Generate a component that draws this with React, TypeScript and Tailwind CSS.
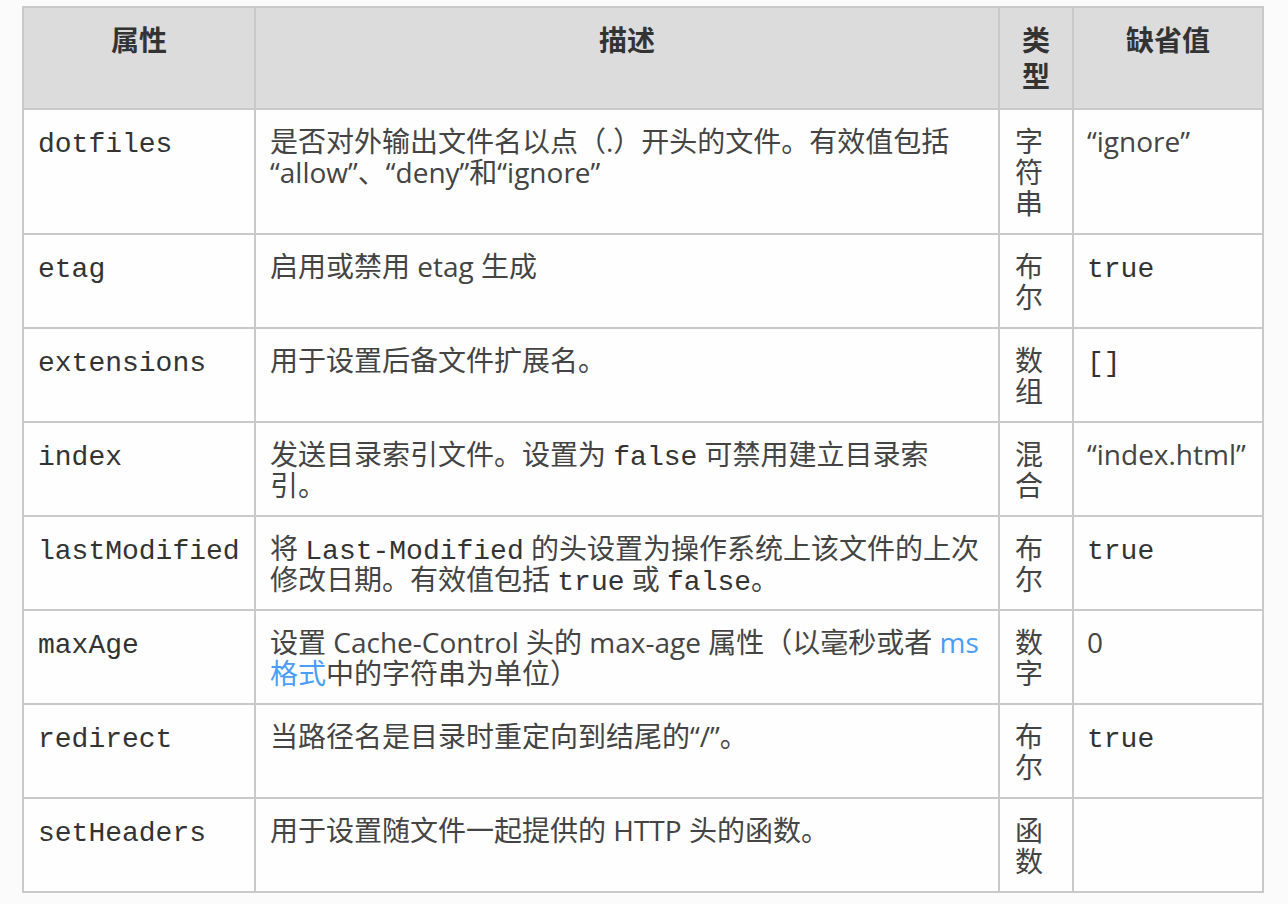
import type {ReactNode} from "react";

const sans = "font-['Open_Sans','Noto_Sans_CJK_SC',sans-serif]";

function Code({children}: {children: ReactNode}) {
  return (
    <span className="font-['Liberation_Mono','Noto_Sans_CJK_SC',monospace] leading-[20px] text-[#333]">
      {children}
    </span>
  );
}

function Link({children}: {children: ReactNode}) {
  return <span className="text-[#4a9df8]">{children}</span>;
}

type Row = {
  name: string;
  desc: ReactNode;
  type: string;
  def: ReactNode;
};

const rows: Row[] = [
  {
    name: "dotfiles",
    desc: (
      <>
        是否对外输出文件名以点（.）开头的文件。有效值包括
        <br />
        “allow”、“deny”和“ignore”
      </>
    ),
    type: "字符串",
    def: "“ignore”",
  },
  {name: "etag", desc: "启用或禁用 etag 生成", type: "布尔", def: <Code>true</Code>},
  {name: "extensions", desc: "用于设置后备文件扩展名。", type: "数组", def: <Code>[]</Code>},
  {
    name: "index",
    desc: (
      <>
        发送目录索引文件。设置为 <Code>false</Code> 可禁用建立目录索
        <br />
        引。
      </>
    ),
    type: "混合",
    def: "“index.html”",
  },
  {
    name: "lastModified",
    desc: (
      <>
        将 <Code>Last-Modified</Code> 的头设置为操作系统上该文件的上次
        <br />
        修改日期。有效值包括 <Code>true</Code> 或 <Code>false</Code>。
      </>
    ),
    type: "布尔",
    def: <Code>true</Code>,
  },
  {
    name: "maxAge",
    desc: (
      <>
        设置 Cache-Control 头的 max-age 属性（以毫秒或者 <Link>ms</Link>
        <br />
        <Link>格式</Link>中的字符串为单位）
      </>
    ),
    type: "数字",
    def: "0",
  },
  {name: "redirect", desc: "当路径名是目录时重定向到结尾的“/”。", type: "布尔", def: <Code>true</Code>},
  {name: "setHeaders", desc: "用于设置随文件一起提供的 HTTP 头的函数。", type: "函数", def: ""},
];

const cell = "border-r-2 border-b-2 border-[#c9c9c9] bg-[#fefefe] pt-[16px] pb-[14px] leading-[31px]";
const head =
  "border-r-2 border-b-2 border-[#c9c9c9] bg-[#dcdcdc] pt-[14px] pb-[14px] leading-[36px] text-center font-bold text-[#333]";

export default function App() {
  return (
    <div className={`min-h-[904px] bg-[#fbfbfb] pt-[6px] pl-[22px] text-[28px] text-[#444] ${sans}`}>
      <div className="grid w-fit grid-cols-[232px_744px_74px_190px] border-t-2 border-l-2 border-[#c9c9c9]">
        <div className={head}>属性</div>
        <div className={head}>描述</div>
        <div className={`${head} px-[15px]`}>类型</div>
        <div className={head}>缺省值</div>

        {rows.map((r) => (
          <div key={r.name} className="contents">
            <div className={`${cell} pl-[14px]`}>
              <Code>{r.name}</Code>
            </div>
            <div className={`${cell} px-[14px]`}>{r.desc}</div>
            <div className={`${cell} px-[15px]`}>{r.type}</div>
            <div className={`${cell} px-[13px]`}>{r.def}</div>
          </div>
        ))}
      </div>
    </div>
  );
}
